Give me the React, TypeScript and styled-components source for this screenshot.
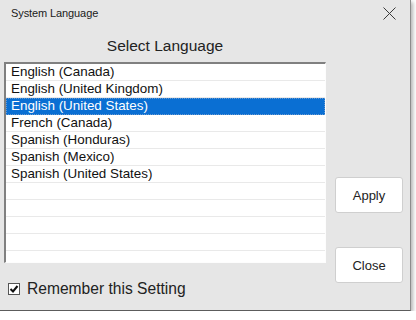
import React from 'react';
import styled, { createGlobalStyle } from 'styled-components';

const GlobalStyle = createGlobalStyle`
  html, body {
    margin: 0;
    padding: 0;
    background: #ffffff;
    font-family: "Liberation Sans", Arial, sans-serif;
  }
`;

const Window = styled.div`
  width: 411px;
  height: 311px;
  box-sizing: border-box;
  background: #e6e6e6;
  border-right: 1px solid #8c8c8c;
  border-bottom: 1px solid #5c5c5c;
  box-shadow: 2px 2px 4px rgba(0, 0, 0, 0.3);
  display: flex;
  flex-direction: column;
`;

const TitleBar = styled.div`
  height: 26px;
  display: flex;
  align-items: center;
  justify-content: space-between;
  padding: 0 14px 0 11px;
  font-size: 11px;
  letter-spacing: -0.1px;
  color: #1a1a1a;
`;

const CloseIcon = styled.svg`
  width: 13px;
  height: 13px;
  margin-top: 1px;
`;

const Body = styled.div`
  flex: 1;
  display: grid;
  grid-template-columns: 322px 1fr;
  padding-left: 4px;
`;

const LeftColumn = styled.div`
  display: flex;
  flex-direction: column;
`;

const Heading = styled.div`
  height: 36px;
  display: flex;
  align-items: center;
  justify-content: center;
  padding-top: 4px;
  box-sizing: border-box;
  font-size: 15.5px;
  color: #222;
`;

const ListBox = styled.div`
  height: 201px;
  box-sizing: border-box;
  background: #fff;
  border-top: 2px solid #808080;
  border-left: 2px solid #808080;
  border-right: 1px solid #fdfdfd;
  border-bottom: 1px solid #fdfdfd;
  overflow: hidden;
`;

const Row = styled.div<{ selected?: boolean }>`
  height: 17px;
  box-sizing: border-box;
  padding-left: 5px;
  font-size: 13.4px;
  line-height: 16px;
  color: ${({ selected }) => (selected ? '#fff' : '#111')};
  background: ${({ selected }) => (selected ? '#0a6fd3' : '#fff')};
  border-bottom: 1px solid ${({ selected }) => (selected ? '#0a6fd3' : '#e9e9e9')};
  outline: ${({ selected }) => (selected ? '1px dotted #6a9ad0' : 'none')};
  outline-offset: -1px;
  white-space: nowrap;
`;

const CheckRow = styled.label`
  flex: 1;
  display: flex;
  align-items: center;
  gap: 7px;
  padding: 4px 0 0 4px;
  font-size: 15.6px;
  color: #222;
`;

const CheckBox = styled.span`
  width: 12px;
  height: 12px;
  box-sizing: border-box;
  border: 1px solid #555;
  background: #fff;
  display: flex;
  align-items: center;
  justify-content: center;
`;

const RightColumn = styled.div`
  display: flex;
  flex-direction: column;
  gap: 34px;
  padding: 151px 0 0 9px;
`;

const Button = styled.button`
  width: 68px;
  height: 36px;
  box-sizing: border-box;
  background: #fff;
  border: 1px solid #cfcfcf;
  border-radius: 3px;
  font-family: "Liberation Sans", Arial, sans-serif;
  font-size: 13px;
  color: #222;
  padding: 0;
`;

const languages = [
  'English (Canada)',
  'English (United Kingdom)',
  'English (United States)',
  'French (Canada)',
  'Spanish (Honduras)',
  'Spanish (Mexico)',
  'Spanish (United States)',
];

export default function App() {
  const selected = 'English (United States)';
  const rows = [...languages, ...Array(5).fill('')];

  return (
    <>
      <GlobalStyle />
      <Window>
        <TitleBar>
          <span>System Language</span>
          <CloseIcon viewBox="0 0 13 13">
            <path d="M0.5 0.5 L12.5 12.5 M12.5 0.5 L0.5 12.5" stroke="#3a3a3a" strokeWidth="1" fill="none" />
          </CloseIcon>
        </TitleBar>
        <Body>
          <LeftColumn>
            <Heading>Select Language</Heading>
            <ListBox>
              {rows.map((name, i) => (
                <Row key={i} selected={name === selected}>
                  {name || '\u00a0'}
                </Row>
              ))}
            </ListBox>
            <CheckRow>
              <CheckBox>
                <svg width="10" height="10" viewBox="0 0 10 10">
                  <path d="M1.5 5 L4 7.5 L8.5 2" stroke="#111" strokeWidth="2" fill="none" />
                </svg>
              </CheckBox>
              Remember this Setting
            </CheckRow>
          </LeftColumn>
          <RightColumn>
            <Button>Apply</Button>
            <Button>Close</Button>
          </RightColumn>
        </Body>
      </Window>
    </>
  );
}
